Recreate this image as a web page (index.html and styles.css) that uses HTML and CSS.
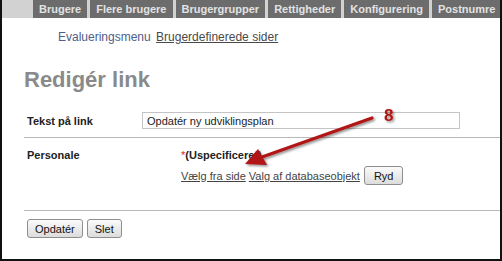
FILE: index.html
```html
<!DOCTYPE html>
<html lang="da">
<head>
    <meta charset="UTF-8">
    <title>Redigér link</title>
    <link rel="stylesheet" href="styles.css">
</head>
<body>
<div class="frame">
    <div class="tabs">
        <span class="tab">Brugere</span>
        <span class="tab">Flere brugere</span>
        <span class="tab">Brugergrupper</span>
        <span class="tab">Rettigheder</span>
        <span class="tab">Konfigurering</span>
        <span class="tab">Postnumre</span>
    </div>

    <div class="submenu">
        <span class="sub-title">Evalueringsmenu</span>
        <a href="#" class="sub-link">Brugerdefinerede sider</a>
    </div>

    <div class="content">
        <h1>Redigér link</h1>

        <div class="row first">
            <label class="label">Tekst på link</label>
            <input class="text" type="text" value="Opdatér ny udviklingsplan">
        </div>
        <hr class="sep-top">

        <div class="row second">
            <span class="label">Personale</span>
            <div class="value">
                <div class="unspec"><span class="star">*</span>(Uspecificeret)</div>
                <div class="links">
                    <a href="#">Vælg fra side</a>
                    <a href="#">Valg af databaseobjekt</a>
                    <button class="btn">Ryd</button>
                </div>
            </div>
        </div>
        <hr class="sep-bottom">

        <div class="actions">
            <button class="btn">Opdatér</button>
            <button class="btn">Slet</button>
        </div>
    </div>

    <!-- annotation arrow -->
    <svg class="callout" width="502" height="261" viewBox="0 0 502 261">
        <defs>
            <filter id="sh" x="-20%" y="-20%" width="140%" height="140%">
                <feDropShadow dx="1.5" dy="1.5" stdDeviation="1.2" flood-color="#000" flood-opacity="0.45"/>
            </filter>
        </defs>
        <g filter="url(#sh)">
            <line x1="372" y1="118" x2="262" y2="157" stroke="#b01515" stroke-width="3.2" stroke-linecap="round"/>
            <polygon points="245,164 258,149 267,165" fill="#b01515"/>
        </g>
        <text x="384" y="121" class="num" filter="url(#sh)">8</text>
    </svg>
</div>
</body>
</html>
```

FILE: styles.css
```css
body {
    margin: 0;
    font-family: 'Liberation Sans', Arial, sans-serif;
    font-size: 11px;
    color: #222;
    background: #fff;
}
.frame {
    position: relative;
    width: 498px;
    height: 259px;
    border-left: 2px solid #111;
    border-right: 2px solid #111;
    border-bottom: 2px solid #111;
    overflow: hidden;
}
.tabs {
    display: flex;
    gap: 3px;
    height: 18px;
    padding-left: 31px;
    background: #d2d2d2;
    white-space: nowrap;
}
.tab {
    flex-shrink: 0;
    background: #6c6c6c;
    color: #e2e2e2;
    font-weight: bold;
    font-size: 11px;
    line-height: 18px;
    padding: 0 6px;
}
.submenu {
    padding: 12px 0 0 56px;
    font-size: 12px;
    line-height: 14px;
}
.sub-title {
    color: #4e5e88;
    margin-right: 2px;
}
.sub-link {
    color: #4a4a4a;
}
.content {
    padding-left: 22px;
}
h1 {
    margin: 23px 0 0 0;
    font-size: 22px;
    line-height: 26px;
    color: #8a8a8a;
    font-weight: bold;
}
.row {
    display: flex;
}
.row.first {
    margin-top: 19px;
    align-items: center;
}
.label {
    font-weight: bold;
    padding-left: 3px;
}
.row.first .label {
    width: 115px;
}
.text {
    width: 318px;
    height: 17px;
    box-sizing: border-box;
    border: 1px solid #c4c4c4;
    padding: 0 4px;
    font-family: 'Liberation Sans', Arial, sans-serif;
    font-size: 11px;
    color: #222;
}
hr {
    border: none;
    border-top: 1px solid #b8b8b8;
    margin: 0;
}
.sep-top {
    margin-top: 8px;
}
.row.second {
    margin-top: 11px;
}
.row.second .label {
    width: 154px;
}
.unspec {
    font-weight: bold;
    line-height: 13px;
}
.star {
    color: #d22;
    font-weight: normal;
}
.links {
    display: flex;
    align-items: center;
    gap: 3px;
    margin-top: 4px;
}
.links a {
    color: #444;
}
.btn {
    font-family: 'Liberation Sans', Arial, sans-serif;
    font-size: 11px;
    color: #111;
    height: 19px;
    padding: 0 8px;
    border: 1px solid #8e8e8e;
    border-radius: 3px;
    background: linear-gradient(#fbfbfb, #dcdcdc);
}
.links .btn {
    padding: 0 9px;
    margin-left: 1px;
}
.sep-bottom {
    margin-top: 25px;
}
.actions {
    display: flex;
    gap: 4px;
    margin-top: 8px;
    padding-left: 3px;
}
.actions .btn {
    padding: 0 7px;
}
.callout {
    position: absolute;
    left: -2px;
    top: 0;
}
.num {
    font-family: 'Liberation Sans', Arial, sans-serif;
    font-weight: bold;
    font-size: 17px;
    fill: #b01515;
}
```
